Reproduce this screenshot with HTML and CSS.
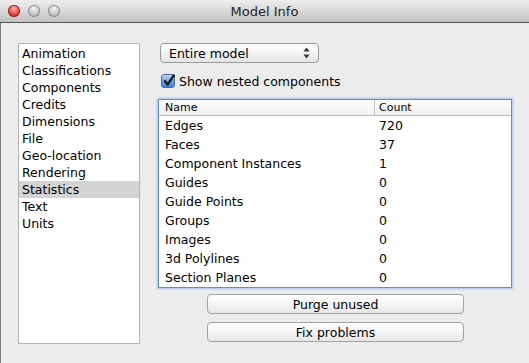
FILE: index.html
```html
<!DOCTYPE html>
<html>
<head>
  <title>Model Info</title>
  <link rel="stylesheet" href="styles.css">
</head>
<body>
  <div class="window">
    <div class="titlebar">
      <div class="lights">
        <span class="light red"></span>
        <span class="light"></span>
        <span class="light"></span>
      </div>
      <div class="title">Model Info</div>
    </div>

    <div class="content">
      <ul class="sidebar">
        <li>Animation</li>
        <li>Classifications</li>
        <li>Components</li>
        <li>Credits</li>
        <li>Dimensions</li>
        <li>File</li>
        <li>Geo-location</li>
        <li>Rendering</li>
        <li class="selected">Statistics</li>
        <li>Text</li>
        <li>Units</li>
      </ul>

      <div class="panel">
        <div class="popup">
          <span>Entire model</span>
          <svg class="popup-arrows" width="7" height="12" viewBox="0 0 7 12">
            <path d="M0.5 4.5 L3.5 0.5 L6.5 4.5 Z" fill="#333"/>
            <path d="M0.5 7.5 L3.5 11.5 L6.5 7.5 Z" fill="#333"/>
          </svg>
        </div>

        <label class="check-row">
          <span class="checkbox">
            <svg width="14" height="14" viewBox="0 0 14 14">
              <path d="M3 7.2 L5.6 10.6 L11.8 1.4" fill="none" stroke="#111" stroke-width="2.2" stroke-linecap="round" stroke-linejoin="round"/>
            </svg>
          </span>
          Show nested components
        </label>

        <div class="stats">
          <div class="stats-head">
            <div class="col-name">Name</div>
            <div class="col-count">Count</div>
          </div>
          <div class="stats-row"><div class="col-name">Edges</div><div class="col-count">720</div></div>
          <div class="stats-row"><div class="col-name">Faces</div><div class="col-count">37</div></div>
          <div class="stats-row"><div class="col-name">Component Instances</div><div class="col-count">1</div></div>
          <div class="stats-row"><div class="col-name">Guides</div><div class="col-count">0</div></div>
          <div class="stats-row"><div class="col-name">Guide Points</div><div class="col-count">0</div></div>
          <div class="stats-row"><div class="col-name">Groups</div><div class="col-count">0</div></div>
          <div class="stats-row"><div class="col-name">Images</div><div class="col-count">0</div></div>
          <div class="stats-row"><div class="col-name">3d Polylines</div><div class="col-count">0</div></div>
          <div class="stats-row"><div class="col-name">Section Planes</div><div class="col-count">0</div></div>
        </div>

        <div class="buttons">
          <button class="btn">Purge unused</button>
          <button class="btn">Fix problems</button>
        </div>
      </div>
    </div>
  </div>
</body>
</html>
```

FILE: styles.css
```css
/* Mac style Model Info window */
body {
  margin: 0;
  font-family: "DejaVu Sans", "Liberation Sans", sans-serif;
  font-size: 12.5px;
  color: #000;
  background-color: #ececec;
}

.window {
  width: 529px;
  height: 363px;
  overflow: hidden;
  background-color: #ececec;
}

.titlebar {
  height: 22px;
  border-bottom: 1px solid #555;
  background: linear-gradient(#eeeeee, #d8d8d8 50%, #c2c2c2);
  display: flex;
  align-items: center;
  position: relative;
}

.lights {
  display: flex;
  gap: 8px;
  padding-left: 8px;
}

.light {
  width: 12px;
  height: 12px;
  border-radius: 50%;
  background: radial-gradient(circle at 50% 30%, #f4f4f4, #c2c2c2 60%, #a8a8a8);
  box-shadow: inset 0 0 0 1px #8c8c8c;
}

.light.red {
  background: radial-gradient(circle at 50% 30%, #ffb3ad, #e8473c 55%, #a8231b);
  box-shadow: inset 0 0 0 1px #8f2a22;
}

.title {
  position: absolute;
  left: 0;
  right: 0;
  text-align: center;
  font-size: 13px;
  color: #222;
  pointer-events: none;
}

.content {
  display: flex;
  height: 340px;
  padding: 20px 0 0 17px;
  border-left: 1px solid #7a7a7a;
  box-sizing: border-box;
}

.sidebar {
  list-style-type: none;
  margin: 0;
  padding: 1px 0 0 0;
  width: 120px;
  height: 298px;
  background-color: #fff;
  border: 1px solid #b3b3b3;
}

.sidebar li {
  height: 17px;
  line-height: 17px;
  padding-left: 3px;
}

.sidebar li.selected {
  background-color: #d4d4d4;
}

.panel {
  margin-left: 18px;
  width: 354px;
  display: flex;
  flex-direction: column;
}

.popup {
  margin-left: 2px;
  height: 18px;
  border: 1px solid #9a9a9a;
  border-radius: 4px;
  background: linear-gradient(#ffffff, #f3f3f3 50%, #e4e4e4);
  display: flex;
  align-items: center;
  justify-content: space-between;
  padding: 0 8px 0 8px;
  box-sizing: content-box;
  width: 141px;
}

.check-row {
  display: flex;
  align-items: center;
  gap: 4px;
  margin: 11px 0 0 3px;
  height: 14px;
}

.checkbox {
  width: 12px;
  height: 12px;
  border: 1px solid #4a6c9c;
  border-radius: 3px;
  background: linear-gradient(#b9d6f6, #6ba3e3 50%, #3f82d6);
  position: relative;
}

.checkbox svg {
  position: absolute;
  left: 0;
  top: -1px;
}

.stats {
  margin-top: 11px;
  border: 1px solid #5e8fd0;
  box-shadow: 0 0 2px 1px #a6c4ec;
  background-color: #fff;
}

.stats-head {
  display: flex;
  height: 15px;
  line-height: 15px;
  font-size: 11px;
  border-bottom: 1px solid #bcbcbc;
  background: linear-gradient(#ffffff, #f0f0f0);
}

.stats-head .col-count {
  border-left: 1px solid #c4c4c4;
  padding-left: 4px;
}

.stats-row {
  display: flex;
  height: 19px;
  line-height: 19px;
}

.col-name {
  width: 215px;
  padding-left: 6px;
  box-sizing: border-box;
}

.col-count {
  padding-left: 5px;
}

.buttons {
  display: flex;
  flex-direction: column;
  gap: 8px;
  margin: 6px 0 0 49px;
}

.btn {
  width: 257px;
  height: 20px;
  padding: 0;
  font-family: "DejaVu Sans", "Liberation Sans", sans-serif;
  font-size: 12.5px;
  color: #000;
  border: 1px solid #a2a2a2;
  border-radius: 4px;
  background: linear-gradient(#ffffff, #f5f5f5 50%, #e6e6e6);
}
```
